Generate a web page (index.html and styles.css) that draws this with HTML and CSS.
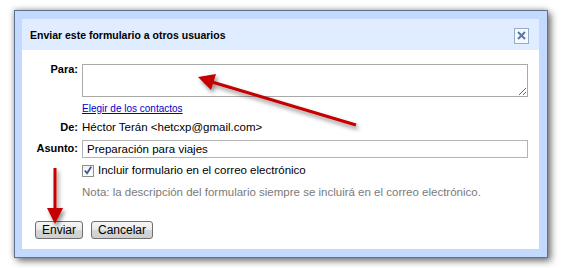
FILE: index.html
```html
<!DOCTYPE html>
<html lang="es">
<head>
<meta charset="utf-8">
<link rel="stylesheet" href="styles.css">
</head>
<body>
<div class="dialog">
  <div class="inner">
    <div class="titlebar">
      <span class="title">Enviar este formulario a otros usuarios</span>
      <span class="close"><svg width="9" height="9" viewBox="0 0 9 9"><path d="M1 1L8 8M8 1L1 8" stroke="#5b7aa6" stroke-width="2"/></svg></span>
    </div>
    <div class="content">
      <div class="form">
        <div class="label lbl-para">Para:</div>
        <textarea class="ta"></textarea>
        <div></div>
        <a class="link" href="#">Elegir de los contactos</a>
        <div class="label">De:</div>
        <div class="value">Héctor Terán &lt;hetcxp@gmail.com&gt;</div>
        <div class="label">Asunto:</div>
        <input class="inp" type="text" value="Preparación para viajes">
        <div></div>
        <div class="check-row">
          <span class="cb"><svg width="11" height="11" viewBox="0 0 11 11"><path d="M2 5.5L4.5 8.5L9 1.5" stroke="#3b5998" stroke-width="2" fill="none"/></svg></span>
          <span>Incluir formulario en el correo electrónico</span>
        </div>
        <div></div>
        <div class="note">Nota: la descripción del formulario siempre se incluirá en el correo electrónico.</div>
      </div>
      <div class="buttons">
        <button class="btn">Enviar</button>
        <button class="btn">Cancelar</button>
      </div>
    </div>
  </div>
</div>
<svg class="arrows" width="563" height="268" viewBox="0 0 563 268">
  <defs>
    <filter id="sh" x="-20%" y="-20%" width="140%" height="140%">
      <feDropShadow dx="2" dy="3" stdDeviation="2" flood-color="#000" flood-opacity="0.45"/>
    </filter>
  </defs>
  <g filter="url(#sh)" fill="#c40000" stroke="#c40000">
    <line x1="356" y1="125" x2="212" y2="82" stroke-width="3"/>
    <polygon points="198,77 216,74 211,90" stroke="none"/>
    <line x1="55" y1="168" x2="55" y2="210" stroke-width="3"/>
    <polygon points="47,208 63,208 55,224" stroke="none"/>
  </g>
</svg>
</body>
</html>
```
FILE: styles.css
```css
html, body {
  margin: 0;
  padding: 0;
  background: #fff;
}
body {
  width: 563px;
  height: 268px;
  position: relative;
  overflow: hidden;
  font-family: "Liberation Sans", Arial, sans-serif;
  font-size: 11.5px;
  color: #000;
}
.dialog {
  margin: 10px 0 0 14px;
  width: 517px;
  border: 1px solid #5d7190;
  background: #c3d9ff;
  padding: 8px 8px 8px 7px;
  box-shadow: 3px 3px 7px rgba(0,0,0,0.55), -1px -1px 5px rgba(0,0,0,0.2);
}
.inner {
  background: #fff;
}
.titlebar {
  background: #e0ecff;
  height: 31px;
  display: flex;
  align-items: center;
  justify-content: space-between;
  padding: 0 10px 0 8px;
}
.title {
  font-weight: bold;
  font-size: 10.5px;
}
.close {
  width: 13px;
  height: 14px;
  border: 1px solid #98acc8;
  background: #f4f8ff;
  display: flex;
  align-items: center;
  justify-content: center;
  margin-top: 2px;
}
.content {
  padding: 14px 11px 10px 0;
}
.form {
  display: grid;
  grid-template-columns: 56px 446px;
  column-gap: 4px;
  row-gap: 4px;
  align-items: center;
}
.label {
  text-align: right;
  font-weight: bold;
  font-size: 11px;
  line-height: 15px;
}
.lbl-para {
  align-self: start;
  margin-top: -2px;
}
.ta {
  box-sizing: border-box;
  width: 446px;
  height: 33px;
  margin: 0;
  border: 1px solid #a9a9a9;
  resize: vertical;
  display: block;
}
.link {
  color: #0000cc;
  text-decoration: underline;
  font-size: 10px;
  line-height: 15px;
  justify-self: start;
}
.value {
  line-height: 15px;
}
.inp {
  box-sizing: border-box;
  width: 446px;
  height: 18px;
  margin: 1px 0 0 0;
  border: 1px solid #b3b3b3;
  padding: 0 4px;
  font-family: "Liberation Sans", Arial, sans-serif;
  font-size: 11.5px;
  color: #000;
}
.check-row {
  display: flex;
  align-items: center;
  gap: 4px;
  line-height: 15px;
  margin-top: 1px;
}
.cb {
  box-sizing: border-box;
  width: 12px;
  height: 12px;
  border: 1px solid #8f8f8f;
  background: linear-gradient(#f0f0f0, #ffffff);
  display: flex;
  align-items: center;
  justify-content: center;
}
.note {
  color: #7a7a7a;
  font-size: 11.5px;
  line-height: 15px;
  margin-top: 3px;
}
.buttons {
  display: flex;
  gap: 8px;
  margin: 21px 0 0 13px;
}
.btn {
  box-sizing: border-box;
  height: 18px;
  padding: 0 6px;
  border: 1px solid #6f6f6f;
  border-radius: 3px;
  background: linear-gradient(#f6f6f6 0%, #e8e8e8 50%, #d6d6d6 51%, #cfcfcf 100%);
  font-family: "Liberation Sans", Arial, sans-serif;
  font-size: 12px;
  color: #000;
  line-height: 16px;
}
.arrows {
  position: absolute;
  left: 0;
  top: 0;
  pointer-events: none;
}
```
